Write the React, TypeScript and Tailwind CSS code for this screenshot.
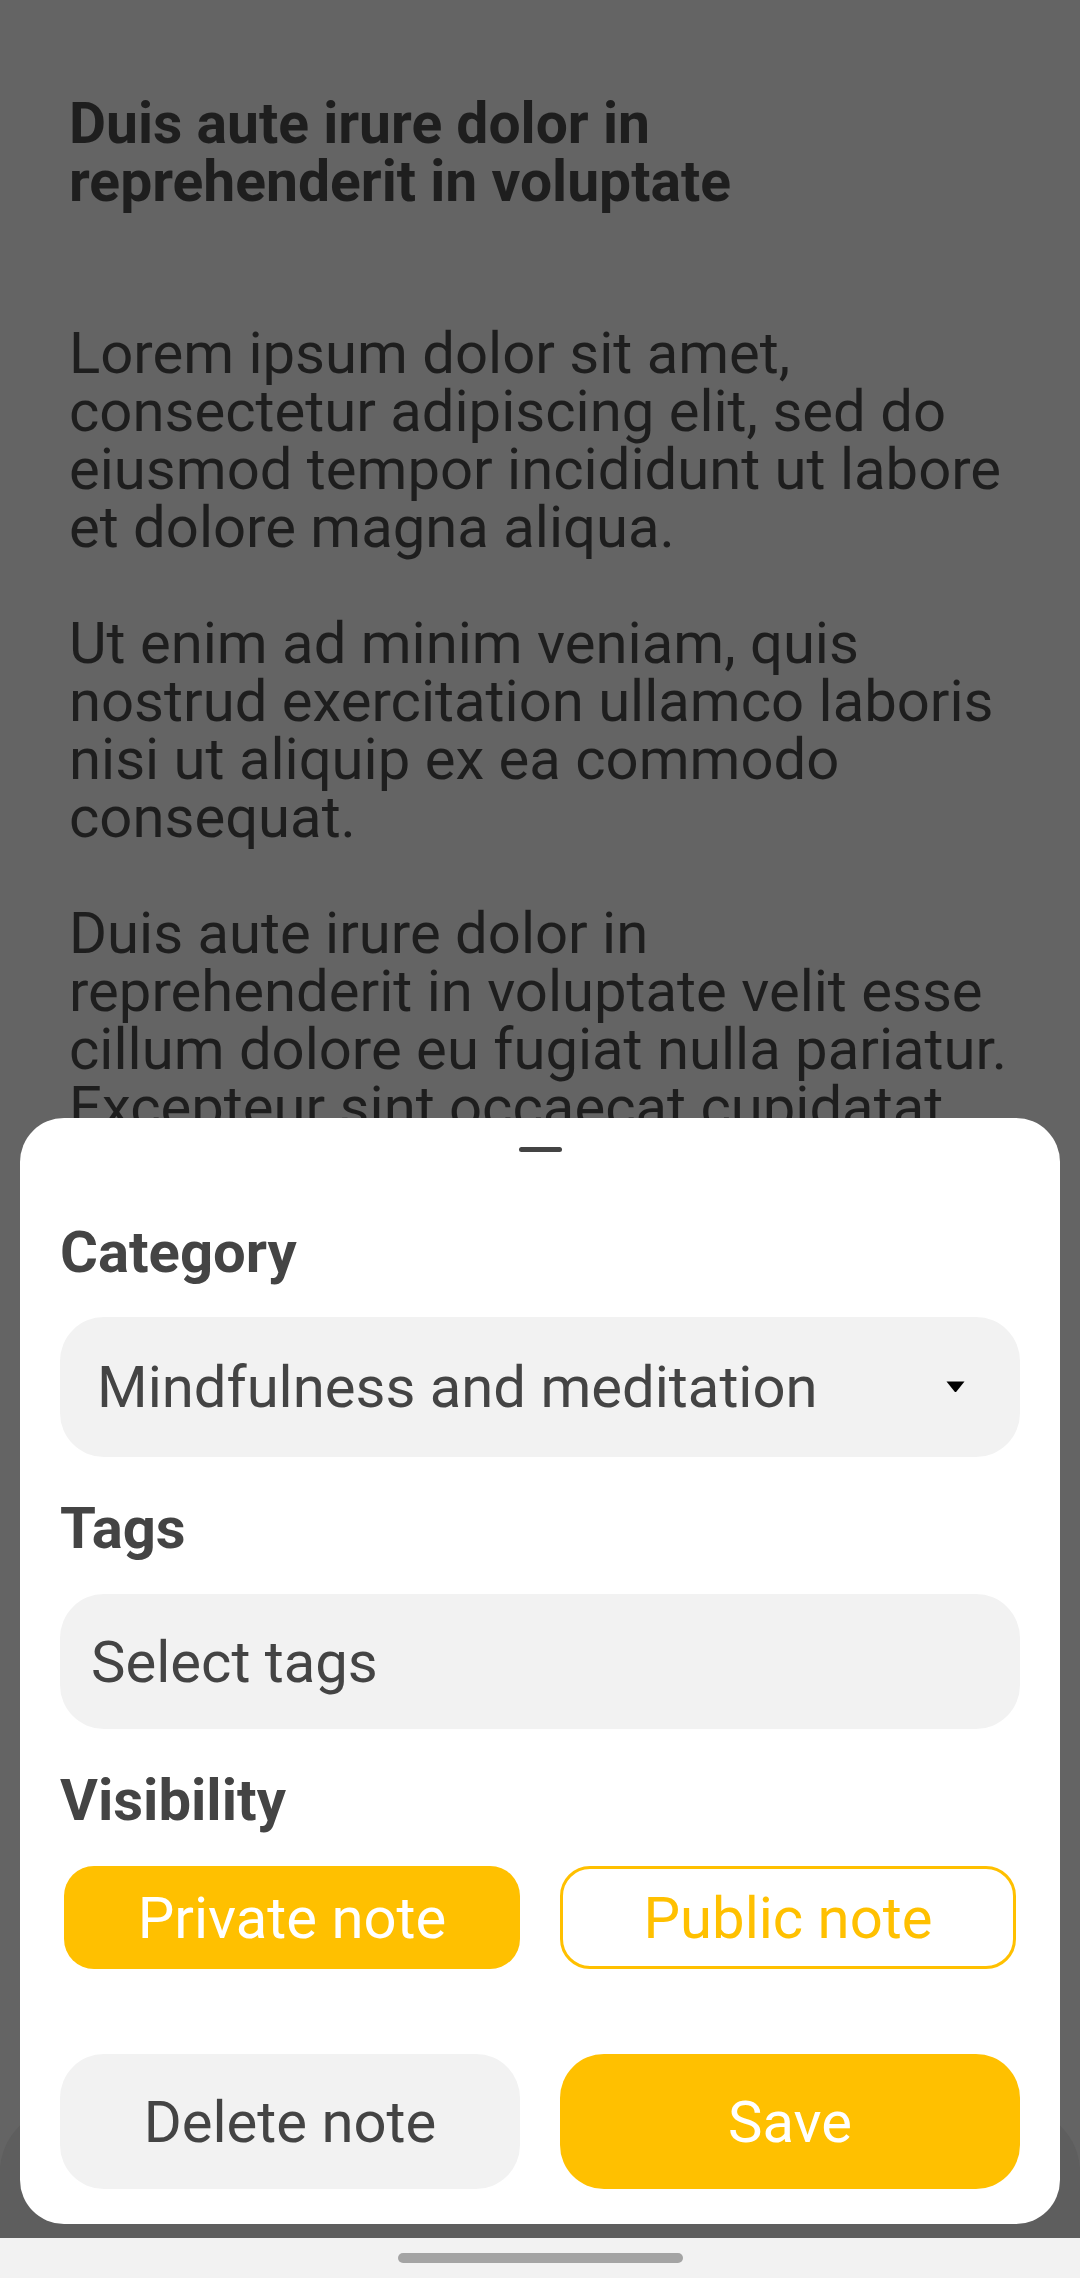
import React from "react";

const heading = ["Duis aute irure dolor in", "reprehenderit in voluptate"];
const paragraphs = [
  [
    "Lorem ipsum dolor sit amet,",
    "consectetur adipiscing elit, sed do",
    "eiusmod tempor incididunt ut labore",
    "et dolore magna aliqua.",
  ],
  [
    "Ut enim ad minim veniam, quis",
    "nostrud exercitation ullamco laboris",
    "nisi ut aliquip ex ea commodo",
    "consequat.",
  ],
  [
    "Duis aute irure dolor in",
    "reprehenderit in voluptate velit esse",
    "cillum dolore eu fugiat nulla pariatur.",
    "Excepteur sint occaecat cupidatat",
    "non proident, sunt in culpa qui",
    "officia deserunt mollit anim id est",
    "laborum.",
  ],
];

export default function App() {
  return (
    <div
      className="relative w-[1080px] h-[2278px] overflow-hidden bg-[#646464]"
      style={{ fontFamily: "Roboto, 'Liberation Sans', sans-serif" }}
    >
      {/* underlying note content */}
      <div className="px-[69px] pt-[95px] text-[#1e1e1e] text-[58px] leading-[58px]">
        <div className="font-bold text-[57px]">
          {heading.map((l) => (
            <div key={l} className="whitespace-nowrap">
              {l}
            </div>
          ))}
        </div>
        <div className="mt-[113px] flex flex-col gap-[58px]">
          {paragraphs.map((p, i) => (
            <div key={i}>
              {p.map((l) => (
                <div key={l} className="whitespace-nowrap">
                  {l}
                </div>
              ))}
            </div>
          ))}
        </div>
      </div>

      {/* underlying bottom bar shape (dimmed) */}
      <div className="absolute left-0 right-0 top-[2108px] h-[130px] rounded-t-[64px] bg-[#5e5e5e]" />

      {/* bottom sheet */}
      <div className="absolute left-[20px] top-[1118px] w-[1040px] h-[1106px] rounded-[44px] bg-white px-[40px] pt-[29px] text-[#444444]">
        <div className="mx-auto h-[5px] w-[43px] rounded-full bg-[#444444]" />

        <div className="mt-[71px] text-[58px] leading-[58px] font-bold">Category</div>
        <div className="mt-[36px] flex h-[140px] items-center justify-between rounded-[44px] bg-[#f2f2f2] pl-[37px] pr-[55px]">
          <span className="text-[58px] leading-[58px] whitespace-nowrap">Mindfulness and meditation</span>
          <svg width="19" height="12" viewBox="0 0 19 12">
            <path d="M0.5 0.5 H18.5 L10.5 10.5 Q9.5 11.6 8.5 10.5 Z" fill="#000" />
          </svg>
        </div>

        <div className="mt-[42px] text-[58px] leading-[58px] font-bold">Tags</div>
        <div className="mt-[37px] flex h-[135px] items-center rounded-[44px] bg-[#f2f2f2] pl-[31px]">
          <span className="text-[58px] leading-[58px] whitespace-nowrap">Select tags</span>
        </div>

        <div className="mt-[42px] text-[58px] leading-[58px] font-bold">Visibility</div>
        <div className="mt-[37px] grid grid-cols-2 gap-[40px] px-[4px]">
          <div className="flex h-[103px] items-center justify-center rounded-[30px] bg-[#ffc000] text-white text-[58px] leading-[58px]">
            Private note
          </div>
          <div className="flex h-[103px] items-center justify-center rounded-[30px] border-[3px] border-[#ffc000] bg-white text-[#ffc000] text-[58px] leading-[58px]">
            Public note
          </div>
        </div>

        <div className="mt-[85px] grid grid-cols-2 gap-[40px]">
          <div className="flex h-[135px] items-center justify-center rounded-[44px] bg-[#f2f2f2] text-[#444444] text-[58px] leading-[58px]">
            Delete note
          </div>
          <div className="flex h-[135px] items-center justify-center rounded-[44px] bg-[#ffc000] text-white text-[58px] leading-[58px]">
            Save
          </div>
        </div>
      </div>

      {/* system navigation bar */}
      <div className="absolute bottom-0 left-0 right-0 flex h-[40px] items-start justify-center bg-[#f2f2f2] pt-[15px]">
        <div className="h-[10px] w-[285px] rounded-full bg-[#a4a4a4]" />
      </div>
    </div>
  );
}
